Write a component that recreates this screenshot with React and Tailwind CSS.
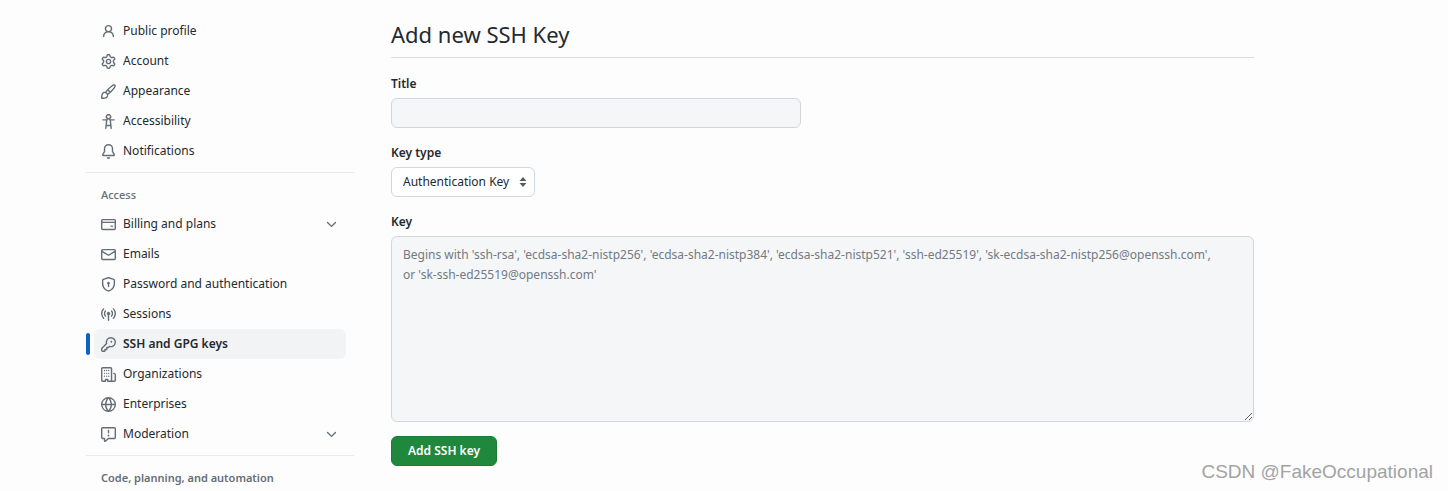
const ICONS = {
  person:
    'M10.561 8.073a6.005 6.005 0 0 1 3.432 5.142.75.75 0 1 1-1.498.07 4.5 4.5 0 0 0-8.99 0 .75.75 0 0 1-1.498-.07 6.004 6.004 0 0 1 3.431-5.142 3.999 3.999 0 1 1 5.123 0ZM10.5 5a2.5 2.5 0 1 0-5 0 2.5 2.5 0 0 0 5 0Z',
  gear:
    'M8 0a8.2 8.2 0 0 1 .701.031C9.444.095 9.99.645 10.16 1.29l.288 1.107c.018.066.079.158.212.224.231.114.454.243.668.386.123.082.233.09.299.071l1.103-.303c.644-.176 1.392.021 1.82.63.27.385.506.792.704 1.218.315.675.111 1.422-.364 1.891l-.814.806c-.049.048-.098.147-.088.294.016.257.016.515 0 .772-.01.147.038.246.088.294l.814.806c.475.469.679 1.216.364 1.891a7.977 7.977 0 0 1-.704 1.217c-.428.61-1.176.807-1.82.63l-1.102-.302c-.067-.019-.177-.011-.3.071a5.909 5.909 0 0 1-.668.386c-.133.066-.194.158-.211.224l-.29 1.106c-.168.646-.715 1.196-1.458 1.26a8.006 8.006 0 0 1-1.402 0c-.743-.064-1.289-.614-1.458-1.26l-.289-1.106c-.018-.066-.079-.158-.212-.224a5.738 5.738 0 0 1-.668-.386c-.123-.082-.233-.09-.299-.071l-1.103.303c-.644.176-1.392-.021-1.82-.63a8.12 8.12 0 0 1-.704-1.218c-.315-.675-.111-1.422.363-1.891l.815-.806c.05-.048.098-.147.088-.294a6.214 6.214 0 0 1 0-.772c.01-.147-.038-.246-.088-.294l-.815-.806C.635 6.045.431 5.298.746 4.623a7.92 7.92 0 0 1 .704-1.217c.428-.61 1.176-.807 1.82-.63l1.102.302c.067.019.177.011.3-.071.214-.143.437-.272.668-.386.133-.066.194-.158.211-.224l.29-1.106C6.009.645 6.556.095 7.299.03 7.53.01 7.764 0 8 0Zm-.571 1.525c-.036.003-.108.036-.137.146l-.289 1.105c-.147.561-.549.967-.998 1.189-.173.086-.34.183-.5.29-.417.278-.97.423-1.529.27l-1.103-.303c-.109-.03-.175.016-.195.045-.22.312-.412.644-.573.99-.014.031-.021.11.059.19l.815.806c.411.406.562.957.53 1.456a4.709 4.709 0 0 0 0 .582c.032.499-.119 1.05-.53 1.456l-.815.806c-.081.08-.073.159-.059.19.162.346.353.677.573.989.02.03.085.076.195.046l1.102-.303c.56-.153 1.113-.008 1.53.27.161.107.328.204.501.29.447.222.85.629.997 1.189l.289 1.105c.029.109.101.143.137.146a6.6 6.6 0 0 0 1.142 0c.036-.003.108-.036.137-.146l.289-1.105c.147-.561.549-.967.998-1.189.173-.086.34-.183.5-.29.417-.278.97-.423 1.529-.27l1.103.303c.109.029.175-.016.195-.045.22-.313.411-.644.573-.99.014-.031.021-.11-.059-.19l-.815-.806c-.411-.406-.562-.957-.53-1.456a4.709 4.709 0 0 0 0-.582c-.032-.499.119-1.05.53-1.456l.815-.806c.081-.08.073-.159.059-.19a6.464 6.464 0 0 0-.573-.989c-.02-.03-.085-.076-.195-.046l-1.102.303c-.56.153-1.113.008-1.53-.27a4.44 4.44 0 0 0-.501-.29c-.447-.222-.85-.629-.997-1.189l-.289-1.105c-.029-.11-.101-.143-.137-.146a6.6 6.6 0 0 0-1.142 0ZM11 8a3 3 0 1 1-6 0 3 3 0 0 1 6 0ZM9.5 8a1.5 1.5 0 1 0-3.001.001A1.5 1.5 0 0 0 9.5 8Z',
  paintbrush:
    'M11.134 1.535c.7-.509 1.416-.942 2.076-1.155.649-.21 1.463-.267 2.069.34.603.601.568 1.411.368 2.07-.202.668-.624 1.39-1.125 2.096-1.011 1.424-2.496 2.987-3.775 4.249-1.098 1.084-2.132 1.839-3.04 2.3a3.744 3.744 0 0 1-1.055 3.217c-.431.431-1.065.691-1.657.861-.614.177-1.294.287-1.914.357A21.151 21.151 0 0 1 .797 16H.743l.007-.75H.749L.742 16a.75.75 0 0 1-.743-.742l.743-.008-.742.007v-.054a21.25 21.25 0 0 1 .13-2.284c.067-.647.187-1.287.358-1.914.17-.591.43-1.226.86-1.657a3.746 3.746 0 0 1 3.227-1.054c.466-.893 1.225-1.907 2.314-2.982 1.271-1.255 2.833-2.75 4.246-3.777ZM1.62 13.089c-.051.464-.086.929-.104 1.395.466-.018.932-.053 1.396-.104a10.511 10.511 0 0 0 1.668-.309c.526-.151.856-.325 1.011-.48a2.25 2.25 0 1 0-3.182-3.182c-.155.155-.329.485-.48 1.01a10.515 10.515 0 0 0-.309 1.67Zm10.396-10.34c-1.224.89-2.605 2.189-3.822 3.384l1.718 1.718c1.21-1.205 2.51-2.597 3.387-3.833.47-.662.78-1.227.912-1.662.134-.444.032-.551.009-.575h-.001V1.78c-.014-.014-.113-.113-.548.027-.432.14-.995.462-1.655.942Zm-4.832 7.266-.001.001a9.859 9.859 0 0 0 1.63-1.142L7.155 7.216a9.7 9.7 0 0 0-1.161 1.607c.482.302.889.71 1.19 1.192Z',
  accessibility:
    'M9.923 5.302c.063.063.122.129.178.198H14A.75.75 0 0 1 14 7h-3.3l.578 5.163.362 2.997a.75.75 0 0 1-1.49.18L9.868 13H6.132l-.282 2.34a.75.75 0 0 1-1.49-.18l.362-2.997L5.3 7H2a.75.75 0 0 1 0-1.5h3.9a2.54 2.54 0 0 1 .176-.198 3 3 0 1 1 3.847 0ZM9.2 7.073h-.001a1.206 1.206 0 0 0-2.398 0L6.305 11.5h3.39ZM9.5 3a1.5 1.5 0 1 0-3.001.001A1.5 1.5 0 0 0 9.5 3Z',
  bell:
    'M8 16a2 2 0 0 0 1.985-1.75c.017-.137-.097-.25-.235-.25h-3.5c-.138 0-.252.113-.235.25A2 2 0 0 0 8 16ZM3 5a5 5 0 0 1 10 0v2.947c0 .05.015.098.042.139l1.703 2.555A1.519 1.519 0 0 1 13.482 13H2.518a1.516 1.516 0 0 1-1.263-2.36l1.703-2.554A.255.255 0 0 0 3 7.947Zm5-3.5A3.5 3.5 0 0 0 4.5 5v2.947c0 .346-.102.683-.294.97l-1.703 2.556a.017.017 0 0 0-.003.01l.001.006c0 .002.002.004.004.006l.006.004.007.001h10.964l.007-.001.006-.004.004-.006.001-.007a.017.017 0 0 0-.003-.01l-1.703-2.554a1.745 1.745 0 0 1-.294-.97V5A3.5 3.5 0 0 0 8 1.5Z',
  card:
    'M10.75 9a.75.75 0 0 0 0 1.5h1.5a.75.75 0 0 0 0-1.5h-1.5ZM0 3.75C0 2.784.784 2 1.75 2h12.5c.966 0 1.75.784 1.75 1.75v8.5A1.75 1.75 0 0 1 14.25 14H1.75A1.75 1.75 0 0 1 0 12.25ZM14.5 6.5h-13v5.75c0 .138.112.25.25.25h12.5a.25.25 0 0 0 .25-.25Zm0-2.75a.25.25 0 0 0-.25-.25H1.75a.25.25 0 0 0-.25.25V5h13Z',
  mail:
    'M1.75 2h12.5c.966 0 1.75.784 1.75 1.75v8.5A1.75 1.75 0 0 1 14.25 14H1.75A1.75 1.75 0 0 1 0 12.25v-8.5C0 2.784.784 2 1.75 2ZM1.5 12.251c0 .138.112.25.25.25h12.5a.25.25 0 0 0 .25-.25V5.809L8.38 9.397a.75.75 0 0 1-.76 0L1.5 5.809v6.442Zm13-8.181v-.32a.25.25 0 0 0-.25-.25H1.75a.25.25 0 0 0-.25.25v.32L8 7.88Z',
  shield:
    'm8.533.133 5.25 1.68A1.75 1.75 0 0 1 15 3.48V7c0 1.566-.32 3.182-1.303 4.682-.983 1.498-2.585 2.813-5.032 3.855a1.697 1.697 0 0 1-1.33 0c-2.447-1.042-4.049-2.357-5.032-3.855C1.32 10.182 1 8.566 1 7V3.48a1.75 1.75 0 0 1 1.217-1.667l5.25-1.68a1.748 1.748 0 0 1 1.066 0Zm-.61 1.429.001.001-5.25 1.68a.251.251 0 0 0-.174.237V7c0 1.36.275 2.666 1.057 3.859.784 1.194 2.121 2.342 4.366 3.298a.196.196 0 0 0 .154 0c2.245-.957 3.582-2.103 4.366-3.297C13.225 9.666 13.5 8.358 13.5 7V3.48a.25.25 0 0 0-.174-.238l-5.25-1.68a.25.25 0 0 0-.153 0ZM9.5 6.5c0 .536-.286 1.032-.75 1.3v2.45a.75.75 0 0 1-1.5 0V7.8A1.5 1.5 0 1 1 9.5 6.5Z',
  broadcast:
    'M8.75 8.582v5.668a.75.75 0 0 1-1.5 0V8.582a1.75 1.75 0 1 1 1.5 0Zm3.983-7.125a.75.75 0 0 1 1.06.026A7.976 7.976 0 0 1 16 7c0 2.139-.84 4.083-2.207 5.517a.75.75 0 1 1-1.086-1.034A6.474 6.474 0 0 0 14.5 7a6.474 6.474 0 0 0-1.793-4.483.75.75 0 0 1 .026-1.06Zm-9.466 0c.3.286.312.76.026 1.06A6.474 6.474 0 0 0 1.5 7a6.47 6.47 0 0 0 1.793 4.483.75.75 0 0 1-1.086 1.034A7.973 7.973 0 0 1 0 7c0-2.139.84-4.083 2.207-5.517a.75.75 0 0 1 1.06-.026Zm8.556 2.321A4.988 4.988 0 0 1 13 7a4.988 4.988 0 0 1-1.177 3.222.75.75 0 1 1-1.146-.967A3.487 3.487 0 0 0 11.5 7c0-.86-.309-1.645-.823-2.255a.75.75 0 0 1 1.146-.967Zm-6.492.958A3.48 3.48 0 0 0 4.5 7a3.48 3.48 0 0 0 .823 2.255.75.75 0 0 1-1.146.967A4.981 4.981 0 0 1 3 7a4.982 4.982 0 0 1 1.188-3.236.75.75 0 1 1 1.143.972Z',
  key:
    'M10.5 0a5.499 5.499 0 1 1-1.288 10.848l-.932.932a.749.749 0 0 1-.53.22H7v.75a.749.749 0 0 1-.22.53l-.5.5a.749.749 0 0 1-.53.22H5v.75a.749.749 0 0 1-.22.53l-.5.5a.749.749 0 0 1-.53.22h-2A1.75 1.75 0 0 1 0 14.25v-2c0-.199.079-.389.22-.53l4.932-4.932A5.5 5.5 0 0 1 10.5 0Zm-4 5.5c-.001.431.069.86.205 1.269a.75.75 0 0 1-.181.768L1.5 12.56v1.69c0 .138.112.25.25.25h1.69l.06-.06v-1.19a.75.75 0 0 1 .75-.75h1.19l.06-.06v-1.19a.75.75 0 0 1 .75-.75h1.19l1.023-1.025a.75.75 0 0 1 .768-.18A4 4 0 1 0 6.5 5.5ZM11 6a1 1 0 1 1 0-2 1 1 0 0 1 0 2Z',
  organization:
    'M1.75 16A1.75 1.75 0 0 1 0 14.25V1.75C0 .784.784 0 1.75 0h8.5C11.216 0 12 .784 12 1.75v12.5c0 .085-.006.168-.018.25h2.268a.25.25 0 0 0 .25-.25V8.285a.25.25 0 0 0-.111-.208l-1.055-.703a.749.749 0 1 1 .832-1.248l1.055.703c.487.325.779.871.779 1.456v5.965A1.75 1.75 0 0 1 14.25 16h-3.5a.766.766 0 0 1-.197-.026c-.099.017-.2.026-.303.026h-3a.75.75 0 0 1-.75-.75V14h-1v1.25a.75.75 0 0 1-.75.75Zm-.25-1.75c0 .138.112.25.25.25H4v-1.25a.75.75 0 0 1 .75-.75h2.5a.75.75 0 0 1 .75.75v1.25h2.25a.25.25 0 0 0 .25-.25V1.75a.25.25 0 0 0-.25-.25h-8.5a.25.25 0 0 0-.25.25ZM3.75 6a.75.75 0 0 1 0 1.5.75.75 0 0 1 0-1.5ZM3.75 3a.75.75 0 0 1 0 1.5.75.75 0 0 1 0-1.5ZM3.75 9a.75.75 0 0 1 0 1.5.75.75 0 0 1 0-1.5ZM6 3a.75.75 0 0 1 0 1.5.75.75 0 0 1 0-1.5ZM6 6a.75.75 0 0 1 0 1.5.75.75 0 0 1 0-1.5ZM6 9a.75.75 0 0 1 0 1.5.75.75 0 0 1 0-1.5ZM8.25 3a.75.75 0 0 1 0 1.5.75.75 0 0 1 0-1.5ZM8.25 6a.75.75 0 0 1 0 1.5.75.75 0 0 1 0-1.5ZM8.25 9a.75.75 0 0 1 0 1.5.75.75 0 0 1 0-1.5Z',
  globe:
    'M8 0a8 8 0 1 1 0 16A8 8 0 0 1 8 0ZM5.78 8.75a9.64 9.64 0 0 0 1.363 4.177c.255.426.542.832.857 1.215.245-.296.551-.705.857-1.215A9.64 9.64 0 0 0 10.22 8.75Zm4.44-1.5a9.64 9.64 0 0 0-1.363-4.177c-.307-.51-.612-.919-.857-1.215a9.927 9.927 0 0 0-.857 1.215A9.64 9.64 0 0 0 5.78 7.25Zm-5.944 1.5H1.543a6.507 6.507 0 0 0 4.666 5.5c-.123-.181-.24-.365-.352-.552-.715-1.192-1.437-2.874-1.581-4.948Zm-2.733-1.5h2.733c.144-2.074.866-3.756 1.58-4.948.12-.197.237-.381.353-.552a6.507 6.507 0 0 0-4.666 5.5Zm10.181 1.5c-.144 2.074-.866 3.756-1.58 4.948-.12.197-.237.381-.353.552a6.507 6.507 0 0 0 4.666-5.5Zm2.733-1.5a6.507 6.507 0 0 0-4.666-5.5c.123.181.24.365.353.552.714 1.192 1.436 2.874 1.58 4.948Z',
  report:
    'M0 1.75C0 .784.784 0 1.75 0h12.5C15.216 0 16 .784 16 1.75v9.5A1.75 1.75 0 0 1 14.25 13H8.06l-2.573 2.573A1.458 1.458 0 0 1 3 14.543V13H1.75A1.75 1.75 0 0 1 0 11.25Zm1.75-.25a.25.25 0 0 0-.25.25v9.5c0 .138.112.25.25.25h2a.75.75 0 0 1 .75.75v2.19l2.72-2.72a.749.749 0 0 1 .53-.22h6.5a.25.25 0 0 0 .25-.25v-9.5a.25.25 0 0 0-.25-.25Zm7 2.25v2.5a.75.75 0 0 1-1.5 0v-2.5a.75.75 0 0 1 1.5 0ZM9 9a1 1 0 1 1-2 0 1 1 0 0 1 2 0Z',
  chevron:
    'M12.78 5.22a.749.749 0 0 1 0 1.06l-4.25 4.25a.749.749 0 0 1-1.06 0L3.22 6.28a.749.749 0 1 1 1.06-1.06L8 8.939l3.72-3.719a.749.749 0 0 1 1.06 0Z',
};

const PROFILE = [
  { label: 'Public profile', icon: 'person' },
  { label: 'Account', icon: 'gear' },
  { label: 'Appearance', icon: 'paintbrush' },
  { label: 'Accessibility', icon: 'accessibility' },
  { label: 'Notifications', icon: 'bell' },
];

const ACCESS = [
  { label: 'Billing and plans', icon: 'card', expandable: true },
  { label: 'Emails', icon: 'mail' },
  { label: 'Password and authentication', icon: 'shield' },
  { label: 'Sessions', icon: 'broadcast' },
  { label: 'SSH and GPG keys', icon: 'key', current: true },
  { label: 'Organizations', icon: 'organization' },
  { label: 'Enterprises', icon: 'globe' },
  { label: 'Moderation', icon: 'report', expandable: true },
];

function Icon({ name }) {
  return (
    <svg viewBox="0 0 16 16" aria-hidden="true" className="size-[15px] shrink-0 fill-[#656d76]">
      <path d={ICONS[name]} />
    </svg>
  );
}

function NavItem({ label, icon, expandable, current }) {
  const row = 'flex h-[30px] w-full items-center gap-[7px] rounded-md px-[7px] text-left';
  return (
    <li className="relative pr-2 pl-2">
      {current && <span className="absolute top-1 left-0 h-[22px] w-1 rounded-md bg-[#0f62c4]" />}
      {expandable ? (
        <button type="button" aria-expanded="false" className={row}>
          <Icon name={icon} />
          <span className="grow">{label}</span>
          <Icon name="chevron" />
        </button>
      ) : (
        <a
          href="#"
          aria-current={current ? 'page' : undefined}
          className={current ? `${row} bg-[#f2f3f4] font-semibold` : row}
        >
          <Icon name={icon} />
          <span>{label}</span>
        </a>
      )}
    </li>
  );
}

function NavGroup({ items }) {
  return (
    <ul>
      {items.map((item) => (
        <NavItem key={item.label} {...item} />
      ))}
    </ul>
  );
}

export default function App() {
  return (
    <div className="relative flex min-h-screen gap-[37px] overflow-hidden bg-[#fdfdfd] pt-4 pr-[194px] pl-[86px] font-['Noto_Sans',sans-serif] text-xs leading-5 text-[#24292f]">
      <nav aria-label="Settings" className="w-[268px] shrink-0">
        <NavGroup items={PROFILE} />
        <hr className="mt-1.5 border-[#e8eaed]" />
        <h2 className="mt-3 mb-1 pl-[15px] text-[11px] leading-5 font-medium text-[#656d76]">Access</h2>
        <NavGroup items={ACCESS} />
        <hr className="mt-1.5 border-[#e8eaed]" />
        <h2 className="mt-3 pl-[15px] text-[11px] leading-5 font-semibold text-[#656d76]">
          Code, planning, and automation
        </h2>
      </nav>

      <main className="min-w-0 grow">
        <h1 className="border-b border-[#d8dee4] pt-[3px] pb-2 text-[22px] leading-[30px]">Add new SSH Key</h1>
        <form className="flex flex-col items-start pt-4 leading-5">
          <label htmlFor="title" className="font-semibold">
            Title
          </label>
          <input
            id="title"
            type="text"
            className="mt-1 h-[30px] w-[410px] max-w-full rounded-md border border-[#d0d7de] bg-[#f4f6f8] px-[11px]"
          />
          <label htmlFor="key-type" className="mt-[15px] font-semibold">
            Key type
          </label>
          <div className="relative mt-1">
            <select
              id="key-type"
              className="h-[30px] w-36 appearance-none rounded-md border border-[#d0d7de] bg-white pl-[11px]"
            >
              <option>Authentication Key</option>
              <option>Signing Key</option>
            </select>
            <svg
              viewBox="0 0 8 10"
              aria-hidden="true"
              className="pointer-events-none absolute top-[10px] right-2 h-[10px] w-2 fill-[#555c64]"
            >
              <path d="M4 0 7.5 4H.5ZM4 10 .5 6h7Z" />
            </svg>
          </div>
          <label htmlFor="key" className="mt-[15px] font-semibold">
            Key
          </label>
          <textarea
            id="key"
            placeholder="Begins with 'ssh-rsa', 'ecdsa-sha2-nistp256', 'ecdsa-sha2-nistp384', 'ecdsa-sha2-nistp521', 'ssh-ed25519', 'sk-ecdsa-sha2-nistp256@openssh.com', or 'sk-ssh-ed25519@openssh.com'"
            className="mt-1 h-[186px] w-full resize rounded-md border border-[#d0d7de] bg-[#f4f6f8] py-2 pr-8 pl-[11px] placeholder:text-[#727a82]"
          />
          <button
            type="submit"
            className="mt-3.5 h-[30px] rounded-md border border-[#1c7c37] bg-[#1f883d] px-4 font-semibold text-white"
          >
            Add SSH key
          </button>
        </form>
      </main>

      <p className="absolute right-[15px] bottom-[7px] font-['Liberation_Sans',sans-serif] text-[19px] leading-6 text-[#a3a3a3]">
        CSDN @FakeOccupational
      </p>
    </div>
  );
}
